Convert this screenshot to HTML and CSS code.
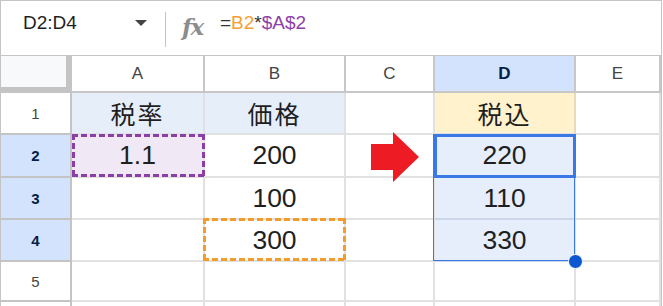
FILE: index.html
```html
<!DOCTYPE html>
<html lang="ja">
<head>
<meta charset="utf-8">
<title>Sheet</title>
<link rel="stylesheet" href="styles.css">
</head>
<body>
<div class="app">
  <div class="fbar">
    <div class="namebox"><span class="name">D2:D4</span><span class="caret"></span></div>
    <div class="divider"></div>
    <span class="fx">fx</span>
    <span class="formula">=<span class="ref-orange">B2</span>*<span class="ref-purple">$A$2</span></span>
  </div>
  <div class="sheet">
    <div class="corner"><div class="corner-inner"></div></div>
    <div class="colhead">A</div>
    <div class="colhead">B</div>
    <div class="colhead">C</div>
    <div class="colhead sel">D</div>
    <div class="colhead">E</div>

    <div class="rowhead">1</div>
    <div class="cell jp fill-blue">税率</div>
    <div class="cell jp fill-blue">価格</div>
    <div class="cell"></div>
    <div class="cell jp fill-yellow">税込</div>
    <div class="cell"></div>

    <div class="rowhead sel">2</div>
    <div class="cell num fill-purple marquee-purple">1.1</div>
    <div class="cell num">200</div>
    <div class="cell"></div>
    <div class="cell num in-range">220</div>
    <div class="cell"></div>

    <div class="rowhead sel">3</div>
    <div class="cell"></div>
    <div class="cell num">100</div>
    <div class="cell"></div>
    <div class="cell num in-range">110</div>
    <div class="cell"></div>

    <div class="rowhead sel">4</div>
    <div class="cell"></div>
    <div class="cell num marquee-orange">300</div>
    <div class="cell"></div>
    <div class="cell num in-range">330</div>
    <div class="cell"></div>

    <div class="rowhead">5</div>
    <div class="cell"></div>
    <div class="cell"></div>
    <div class="cell"></div>
    <div class="cell"></div>
    <div class="cell"></div>

    <div class="rowhead"></div>
    <div class="cell"></div>
    <div class="cell"></div>
    <div class="cell"></div>
    <div class="cell"></div>
    <div class="cell"></div>

    <svg class="arrow" width="49" height="50" viewBox="0 0 49 50"><polygon points="0,12 22,12 22,0 48,25 22,50 22,38 0,38" fill="#ed1c24"/></svg>
    <div class="range"></div>
    <div class="active"></div>
    <div class="handle"></div>
  </div>
</div>
</body>
</html>
```

FILE: styles.css
```css
body {
  margin: 0;
  background: #fff;
}

.app {
  width: 662px;
  height: 306px;
  box-sizing: border-box;
  border: 1px solid #c4c4c4;
  border-bottom: none;
  overflow: hidden;
  background: #fff;
  font-family: "Liberation Sans", Arial, sans-serif;
  color: #1f1f1f;
}

/* formula bar */
.fbar {
  height: 54px;
  border-bottom: 1px solid #c4c4c4;
  display: flex;
  align-items: flex-start;
}

.namebox {
  width: 146px;
  padding-left: 22px;
  padding-top: 11px;
  box-sizing: border-box;
  display: flex;
  justify-content: space-between;
  align-items: flex-start;
  margin-right: 18px;
}

.name {
  font-size: 19px;
  line-height: 22px;
  color: #1f1f1f;
}

.caret {
  width: 0;
  height: 0;
  margin-top: 8px;
  border-left: 6.5px solid transparent;
  border-right: 6.5px solid transparent;
  border-top: 6.5px solid #444;
}

.divider {
  width: 1px;
  height: 35px;
  margin-top: 11px;
  background: #c4c4c4;
}

.fx {
  display: inline-block;
  width: 27px;
  margin-left: 16px;
  margin-top: 13px;
  font-family: "DejaVu Serif", "Liberation Serif", serif;
  font-style: italic;
  font-weight: bold;
  font-size: 23px;
  line-height: 26px;
  letter-spacing: -1.5px;
  color: #8c8c8c;
}

.formula {
  margin-left: 11px;
  padding-top: 11px;
  font-size: 19px;
  line-height: 22px;
  color: #333;
}

.ref-orange { color: #f6a033; }
.ref-purple { color: #8e3fa8; }

/* sheet grid */
.sheet {
  position: relative;
  display: grid;
  grid-template-columns: 71px 133px 141px 89px 141px 1fr;
  grid-template-rows: 37px 42px 43px 42px 42px 40px 42px;
}

.corner {
  background: #c4c4c4;
}

.corner-inner {
  width: 65px;
  height: 31px;
  background: #f8f9fa;
}

.colhead {
  box-sizing: border-box;
  border-right: 2px solid #c7c7c7;
  border-bottom: 2px solid #c7c7c7;
  display: flex;
  align-items: center;
  justify-content: center;
  font-size: 17px;
  color: #444;
  background: #fff;
}

.colhead.sel {
  background: #d3e3fd;
  color: #041e49;
  font-weight: bold;
}

.rowhead {
  box-sizing: border-box;
  border-right: 2px solid #c4c4c4;
  border-bottom: 2px solid #c4c4c4;
  display: flex;
  align-items: center;
  justify-content: center;
  font-size: 15px;
  color: #444;
  background: #fff;
}

.rowhead.sel {
  background: #d3e3fd;
  color: #041e49;
  font-weight: bold;
}

.cell {
  position: relative;
  box-sizing: border-box;
  border-right: 2px solid #e1e1e1;
  border-bottom: 2px solid #e1e1e1;
  display: flex;
  align-items: center;
  justify-content: center;
  color: #1f1f1f;
}

.jp {
  font-family: "Noto Sans CJK JP", "Noto Sans CJK SC", sans-serif;
  font-size: 25px;
  letter-spacing: 2px;
}

.num {
  font-size: 26.5px;
}

.fill-blue { background: #e6eefa; }
.fill-yellow { background: #fff2cc; border-right-color: #e6dcbc; }
.fill-purple { background: #f0e8f5; }
.in-range { background: #e6eefb; border-bottom-color: #cbd6e8; }

.marquee-purple::after,
.marquee-orange::after {
  content: "";
  position: absolute;
  --c: #8a3ea6;
  background:
    repeating-linear-gradient(90deg, var(--c) 0 6px, transparent 6px 9px) top left / 100% 3px no-repeat,
    repeating-linear-gradient(90deg, var(--c) 0 6px, transparent 6px 9px) bottom left / 100% 3px no-repeat,
    repeating-linear-gradient(180deg, var(--c) 0 6px, transparent 6px 9px) top left / 3px 100% no-repeat,
    repeating-linear-gradient(180deg, var(--c) 0 6px, transparent 6px 9px) top right / 3px 100% no-repeat;
}

.marquee-purple::after {
  top: -1px;
  left: 0;
  right: -2px;
  bottom: -1px;
}

.marquee-orange::after {
  --c: #f39c2b;
  top: -2px;
  left: -2px;
  right: -2px;
  bottom: -1px;
}

/* overlays */
.arrow {
  position: absolute;
  left: 370px;
  top: 76px;
}

.range {
  position: absolute;
  left: 432px;
  top: 78px;
  width: 142px;
  height: 127px;
  box-sizing: border-box;
  border: 1px solid #3a78e6;
}

.active {
  position: absolute;
  left: 433px;
  top: 78px;
  width: 142px;
  height: 44px;
  box-sizing: border-box;
  border: 3px solid #3a78e6;
}

.handle {
  position: absolute;
  left: 567px;
  top: 198px;
  width: 13px;
  height: 13px;
  border-radius: 50%;
  background: #0b57d0;
  border: 1px solid #fff;
}
```
